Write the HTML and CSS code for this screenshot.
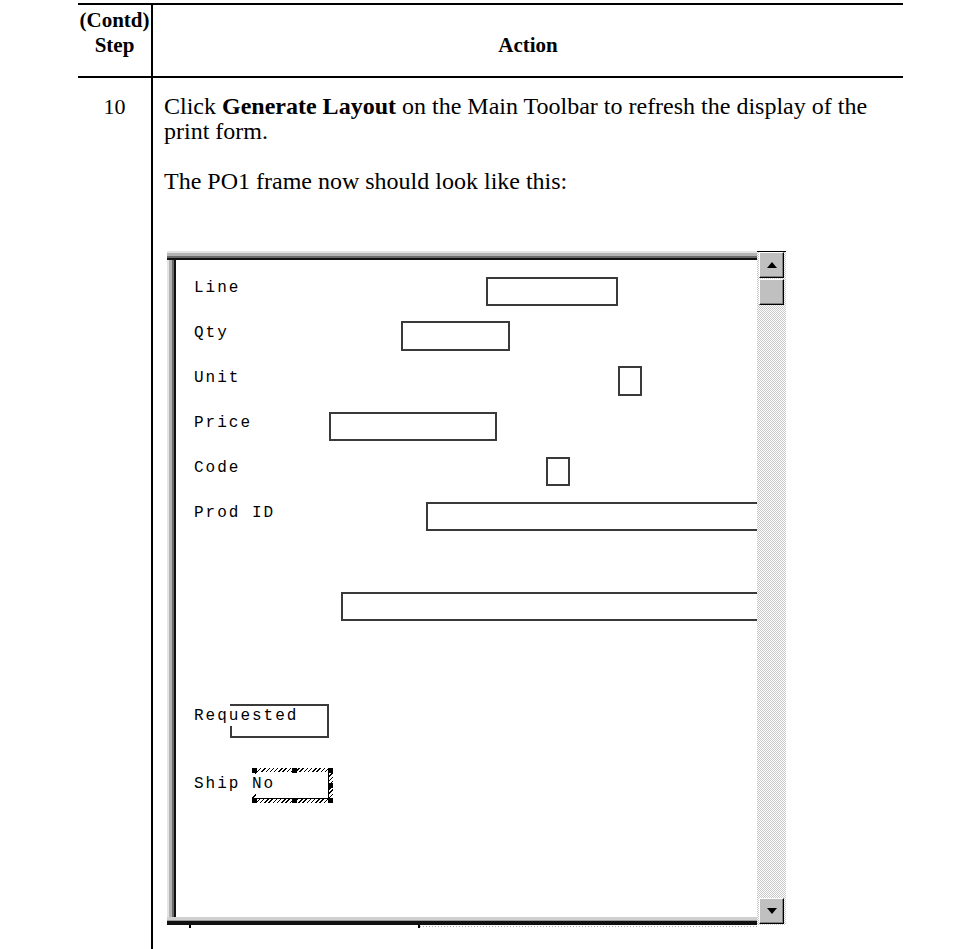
FILE: index.html
```html
<html lang="en">
<head>
	<meta http-equiv="Content-Type" content="text/html; charset=utf-8">
	<meta name="viewport" content="width=device-width, initial-scale=1.0">
	<title>PO1 frame</title>
	<link rel="stylesheet" href="styles.css">
</head>
<body>
<div class="page">
	<table class="steps">
		<thead>
			<tr>
				<th class="step-col">(Contd)<br>Step</th>
				<th class="action-col">Action</th>
			</tr>
		</thead>
		<tbody>
			<tr>
				<td class="step-num">10</td>
				<td class="action">
					<p><span>Click <b>Generate Layout</b> on the Main Toolbar to refresh the display of the</span><br><span>print form.</span></p>
					<p>The PO1 frame now should look like this:</p>

					<div class="frame">
						<div class="pane">
							<div class="canvas">
								<span class="lbl" style="top:18px">Line</span>
								<span class="lbl" style="top:63px">Qty</span>
								<span class="lbl" style="top:108px">Unit</span>
								<span class="lbl" style="top:153px">Price</span>
								<span class="lbl" style="top:198px">Code</span>
								<span class="lbl" style="top:243px">Prod ID</span>

								<div class="fld" style="left:310px;top:17px;width:132px;height:29px"></div>
								<div class="fld" style="left:225px;top:61px;width:109px;height:30px"></div>
								<div class="fld" style="left:442px;top:106px;width:24px;height:30px"></div>
								<div class="fld" style="left:153px;top:152px;width:168px;height:29px"></div>
								<div class="fld" style="left:370px;top:197px;width:24px;height:29px"></div>
								<div class="fld" style="left:250px;top:242px;width:420px;height:29px"></div>
								<div class="fld" style="left:165px;top:332px;width:520px;height:29px"></div>

								<div class="fld" style="left:54px;top:444px;width:99px;height:34px"></div>
								<span class="lbl" style="top:446px">Requested</span>

								<div class="sel" style="left:76px;top:508px;width:81px;height:35px">
									<i class="h tl"></i><i class="h tm"></i><i class="h tr"></i>
									<i class="h ml"></i><i class="h mr"></i>
									<i class="h bl"></i><i class="h bm"></i><i class="h br"></i>
								</div>
								<span class="lbl" style="top:514px">Ship No</span>
							</div>
						</div>
						<div class="vscroll">
							<div class="sbtn"><span class="arrow up"></span></div>
							<div class="thumb"></div>
							<div class="track"></div>
							<div class="sbtn"><span class="arrow down"></span></div>
						</div>
					</div>
					<div class="frame-foot">
						<i class="tick"></i>
						<i class="tick second"></i>
						<span class="dots"></span>
					</div>
				</td>
			</tr>
		</tbody>
	</table>
</div>
</body>
</html>
```

FILE: styles.css
```css
body{
	margin: 0;
	padding: 0;
	background: #fff;
	color: #000;
	font-family: "Liberation Serif", "Times New Roman", serif;
}

.page{
	padding: 3px 0 0 78px;
	height: 946px;
	overflow: hidden;
}

.steps{
	width: 825px;
	border-collapse: collapse;
}

.steps th{
	font-size: 21px;
	line-height: 25px;
	font-weight: bold;
	border-top: 2px solid #000;
	border-bottom: 2px solid #000;
	padding: 3px 0 18px;
	vertical-align: bottom;
	text-align: center;
}

.steps .step-col{
	width: 73px;
	border-right: 2px solid #000;
	vertical-align: top;
}

.step-num{
	border-right: 2px solid #000;
	text-align: center;
	vertical-align: top;
	font-size: 22px;
	line-height: 25px;
	padding-top: 16px;
}

.action{
	vertical-align: top;
	font-size: 24px;
	line-height: 25px;
	padding: 16px 10px 60px 11px;
}

.action p{
	margin: 0 0 25px;
	white-space: nowrap;
}

.action p:last-of-type{
	margin: 0;
}

/* the screenshot of the form designer */
.frame{
	display: flex;
	width: 619px;
	height: 674px;
	margin: 57px 0 0 3px;
}

.pane{
	flex: 1;
	padding: 9px 0 8px 9px;
	background:
		linear-gradient(to bottom, #e4e4e4 0 2px, #b4b4b4 2px 5px, #6a6a6a 5px 7px, #111 7px 9px) top left / 100% 9px no-repeat,
		linear-gradient(to bottom, #d0d0d0 0 3px, #9a9a9a 3px 4px, #111 4px 7px) bottom left / 100% 8px no-repeat,
		linear-gradient(to right, #e4e4e4 0 2px, #b4b4b4 2px 5px, #6a6a6a 5px 7px, #111 7px 9px) top left / 9px 100% no-repeat;
}

.canvas{
	position: relative;
	height: 100%;
	background: #fff;
	overflow: hidden;
	font-family: "Liberation Mono", "Courier New", monospace;
	font-size: 16px;
	letter-spacing: 2px;
	line-height: 20px;
}

.lbl{
	position: absolute;
	left: 18px;
	background: #fff;
	white-space: pre;
}

.fld{
	position: absolute;
	border: 2px solid #3a3a3a;
	box-sizing: border-box;
}

.sel{
	position: absolute;
	box-sizing: border-box;
	border: 4px solid transparent;
	background:
		linear-gradient(#fff, #fff) padding-box,
		repeating-linear-gradient(-45deg, #000 0 1px, #fff 1px 3px) border-box;
	box-shadow: inset -1px -1px #000;
}

.h{
	position: absolute;
	width: 5px;
	height: 5px;
	background: #000;
}
.tl{ left: -4px; top: -4px; }
.tm{ left: 36px; top: -4px; }
.tr{ right: -4px; top: -4px; }
.ml{ left: -4px; top: 11px; }
.mr{ right: -4px; top: 11px; }
.bl{ left: -4px; bottom: -4px; }
.bm{ left: 36px; bottom: -4px; }
.br{ right: -4px; bottom: -4px; }

.vscroll{
	width: 29px;
	display: flex;
	flex-direction: column;
	border-top: 1px solid #000;
	background: repeating-conic-gradient(#c8c8c8 0 25%, #fff 0 50%) 0 0 / 2px 2px;
}

.sbtn, .thumb{
	height: 24px;
	margin: 0 2px 1px 2px;
	background: #c0c0c0;
	border: 1px solid;
	border-color: #fff #000 #000 #fff;
	box-shadow: inset -1px -1px #808080;
	display: flex;
	align-items: center;
	justify-content: center;
}

.track{
	flex: 1;
}

.arrow{
	width: 0;
	height: 0;
	border-left: 5px solid transparent;
	border-right: 5px solid transparent;
}
.arrow.up{ border-bottom: 6px solid #000; }
.arrow.down{ border-top: 6px solid #000; }

.frame-foot{
	display: flex;
	align-items: flex-start;
	width: 590px;
	height: 3px;
	margin-left: 3px;
}

.tick{
	width: 2px;
	height: 3px;
	background: #000;
	margin-left: 22px;
}

.tick.second{
	margin-left: 227px;
}

.dots{
	flex: 1;
	height: 1px;
	margin-top: 1px;
	background: repeating-linear-gradient(to right, #aaa 0 1px, transparent 1px 3px);
}
```
